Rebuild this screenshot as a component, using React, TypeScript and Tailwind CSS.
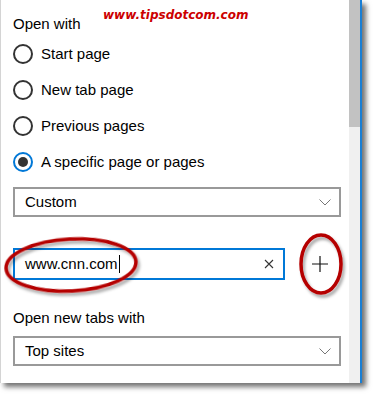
import { ReactNode } from 'react';

function Radio({ label, checked = false }: { label: string; checked?: boolean }) {
  return (
    <div className="flex h-[36px] items-center">
      {checked ? (
        <div className="flex h-[20px] w-[20px] items-center justify-center rounded-full border-2 border-[#0078d7]">
          <div className="h-[10px] w-[10px] rounded-full bg-[#333]" />
        </div>
      ) : (
        <div className="h-[20px] w-[20px] rounded-full border-2 border-[#333]" />
      )}
      <span className="ml-[8px] leading-[20px]">{label}</span>
    </div>
  );
}

function Chevron() {
  return (
    <svg width="12" height="7" viewBox="0 0 12 7" className="text-[#777]">
      <path d="M0.5 0.5 L6 6 L11.5 0.5" fill="none" stroke="currentColor" strokeWidth="1" />
    </svg>
  );
}

function Select({ value, className = '' }: { value: string; className?: string }) {
  return (
    <div
      className={`flex h-[30px] w-[328px] items-center justify-between border-2 border-[#999] pl-[10px] pr-[8px] ${className}`}
    >
      <span className="leading-[20px]">{value}</span>
      <Chevron />
    </div>
  );
}

function Label({ children, className = '' }: { children: ReactNode; className?: string }) {
  return <div className={`h-[20px] leading-[20px] ${className}`}>{children}</div>;
}

export default function App() {
  return (
    <div
      className="relative h-[398px] w-[376px] overflow-hidden bg-white text-[15px] text-black"
      style={{ fontFamily: '"Liberation Sans", Arial, sans-serif' }}
    >
      {/* Settings panel */}
      <div className="flex h-[383px] w-[362px] border-l border-r-2 border-l-[#d4d4d4] border-r-[#1a7fd4] bg-white shadow-[4px_4px_5px_rgba(0,0,0,0.55)]">
        <div className="flex-1 pl-[12px]">
          <div className="h-[36px] pt-[14px]">
            <Label>Open with</Label>
          </div>
          <Radio label="Start page" />
          <Radio label="New tab page" />
          <Radio label="Previous pages" />
          <Radio label="A specific page or pages" checked />

          <Select value="Custom" className="mt-[7px]" />

          <div className="mt-[31px] flex items-center">
            <div className="flex h-[32px] w-[272px] items-center justify-between border-2 border-[#0078d7] pl-[10px] pr-[9px]">
              <div className="flex items-center">
                <span className="leading-[20px]">www.cnn.com</span>
                <span className="ml-[1px] h-[18px] w-[1px] bg-black" />
              </div>
              <svg width="10" height="10" viewBox="0 0 10 10">
                <path d="M1 1 L9 9 M9 1 L1 9" stroke="#333" strokeWidth="1.1" />
              </svg>
            </div>
            <svg width="16" height="16" viewBox="0 0 16 16" className="ml-[27px]">
              <path d="M8 0 V16 M0 8 H16" stroke="#111" strokeWidth="1.2" />
            </svg>
          </div>

          <Label className="mt-[28px]">Open new tabs with</Label>
          <Select value="Top sites" className="mt-[8px]" />
        </div>

        {/* Scrollbar */}
        <div className="flex w-[11px] flex-col bg-[#f0f0f0]">
          <div className="h-[127px] bg-[#c2c2c2]" />
        </div>
      </div>

      {/* Watermark */}
      <div
        className="absolute left-[103px] top-[7px] text-[12px] font-bold italic leading-[16px] text-[#cc0000]"
        style={{ fontFamily: '"DejaVu Sans", Verdana, sans-serif' }}
      >
        www.tipsdotcom.com
      </div>

      {/* Red annotation circles */}
      <svg className="pointer-events-none absolute left-0 top-0" width="376" height="398">
        <defs>
          <filter id="sh" x="-20%" y="-20%" width="140%" height="140%">
            <feDropShadow dx="2" dy="3" stdDeviation="1.5" floodColor="#000" floodOpacity="0.35" />
          </filter>
        </defs>
        <ellipse
          cx="71"
          cy="265"
          rx="65"
          ry="26"
          transform="rotate(-3 71 265)"
          fill="none"
          stroke="#b50000"
          strokeWidth="3.5"
          filter="url(#sh)"
        />
        <ellipse cx="321" cy="264" rx="20" ry="29" fill="none" stroke="#b50000" strokeWidth="3.5" filter="url(#sh)" />
      </svg>
    </div>
  );
}
